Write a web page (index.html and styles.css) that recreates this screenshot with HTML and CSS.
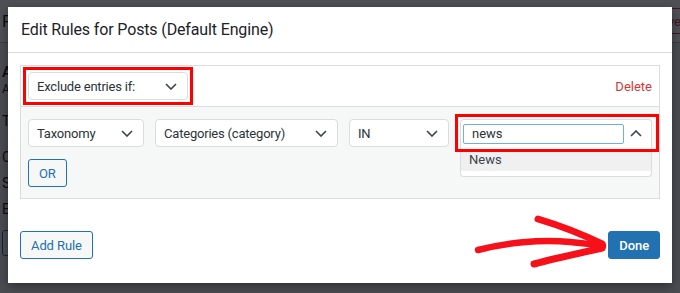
FILE: index.html
```html
<!DOCTYPE html>
<html lang="en">
<head>
    <meta charset="UTF-8">
    <meta name="viewport" content="width=device-width, initial-scale=1.0">
    <title>Edit Rules for Posts</title>
    <link rel="stylesheet" href="styles.css">
</head>
<body>
    <div class="page">
        <header class="page-head">
            <span class="page-title">Posts</span>
            <button class="page-remove">Remove</button>
        </header>
        <div class="page-body">
            <h2>Attributes</h2>
            <p class="muted">Attribute relevance</p>
            <p class="row-t">Title</p>
            <p class="row-c">Content</p>
            <p class="row-s">Slug</p>
            <p class="row-e">Excerpt</p>
            <button class="page-btn">Add/Remove</button>
        </div>
    </div>

    <div class="overlay"></div>

    <div class="modal">
        <div class="modal-head">
            <h1>Edit Rules for Posts (Default Engine)</h1>
        </div>
        <div class="modal-body">
            <div class="rule">
                <div class="rule-top">
                    <div class="select marked">
                        <span>Exclude entries if:</span>
                        <svg class="chev" viewBox="0 0 12 7"><path d="M1 1l5 5 5-5"/></svg>
                    </div>
                    <a class="delete" href="#">Delete</a>
                </div>
                <div class="rule-body">
                    <div class="conditions">
                        <div class="select w-tax">
                            <span>Taxonomy</span>
                            <svg class="chev" viewBox="0 0 12 7"><path d="M1 1l5 5 5-5"/></svg>
                        </div>
                        <div class="select w-cat">
                            <span>Categories (category)</span>
                            <svg class="chev" viewBox="0 0 12 7"><path d="M1 1l5 5 5-5"/></svg>
                        </div>
                        <div class="select w-op">
                            <span>IN</span>
                            <svg class="chev" viewBox="0 0 12 7"><path d="M1 1l5 5 5-5"/></svg>
                        </div>
                        <div class="combo marked-2">
                            <input class="combo-input" type="text" value="news">
                            <svg class="chev up" viewBox="0 0 12 7"><path d="M1 6l5-5 5 5"/></svg>
                            <ul class="combo-list">
                                <li class="active">News</li>
                            </ul>
                        </div>
                    </div>
                    <button class="btn">OR</button>
                </div>
            </div>
            <div class="modal-foot">
                <button class="btn">Add Rule</button>
                <button class="btn primary">Done</button>
            </div>
        </div>
    </div>

    <svg class="arrow" width="680" height="293" viewBox="0 0 680 293">
        <path d="M478 250 C 505 243, 540 239, 570 242 S 595 245, 603 246" stroke-width="6.5"/>
        <path d="M538 219 C 558 225, 580 233, 602 244" stroke-width="7"/>
        <path d="M534 264 C 556 258, 580 253, 602 248" stroke-width="7"/>
    </svg>
</body>
</html>
```

FILE: styles.css
```css
* {
    box-sizing: border-box;
}
body {
    margin: 0;
    width: 680px;
    height: 293px;
    overflow: hidden;
    position: relative;
    font-family: Roboto, "Noto Sans", sans-serif;
    color: #1e1e1e;
    background-color: #f0f0f1;
}

/* page behind the dialog */
.page {
    width: 680px;
    overflow: hidden;
}
.page-head {
    display: flex;
    align-items: center;
    height: 43px;
    padding: 0 0 0 2px;
    background-color: #fff;
    border-bottom: 1px solid #c3c4c7;
}
.page-title {
    font-size: 17px;
}
.page-remove {
    margin-left: auto;
    margin-right: -10px;
    height: 26px;
    padding: 0 8px;
    font: inherit;
    font-size: 13px;
    color: #d63638;
    background: #fff;
    border: 1px solid #d63638;
    border-radius: 3px;
}
.page-body {
    padding: 20px 2px 0;
    font-size: 14px;
}
.page-body h2 {
    margin: 0;
    font-size: 15px;
    font-weight: 600;
}
.page-body p {
    margin: 0;
}
.page-body .muted {
    font-size: 12px;
    margin-top: 1px;
}
.page-body .row-t {
    margin-top: 17px;
}
.page-body .row-c {
    margin-top: 20px;
}
.page-body .row-s,
.page-body .row-e {
    margin-top: 10px;
}
.page-btn {
    margin-top: 13px;
    height: 26px;
    padding: 0 10px;
    font: inherit;
    font-size: 13px;
    color: #2271b1;
    background: #f6f7f7;
    border: 1px solid #2271b1;
    border-radius: 3px;
}

.overlay {
    position: absolute;
    inset: 0;
    background-color: rgba(4, 6, 14, 0.7);
}

/* dialog */
.modal {
    position: absolute;
    left: 8px;
    top: 7px;
    width: 664px;
    background-color: #fff;
    box-shadow: 0 3px 10px rgba(0, 0, 0, 0.4);
}
.modal-head {
    height: 46px;
    padding: 0 13px;
    display: flex;
    align-items: center;
    border-bottom: 1px solid #dcdcde;
}
.modal-head h1 {
    margin: 0;
    font-size: 16px;
    font-weight: 400;
    letter-spacing: -0.14px;
    color: #1d2327;
}
.modal-body {
    padding: 12px 12px 24px;
}
.rule {
    border: 1px solid #dcdcde;
}
.rule-top {
    display: flex;
    align-items: center;
    justify-content: space-between;
    padding: 6px 7px;
    border-bottom: 1px solid #dcdcde;
}
.delete {
    font-size: 13px;
    color: #d63638;
    text-decoration: none;
}
.rule-body {
    padding: 12px 7px 11px;
    background-color: #f6f7f7;
}
.conditions {
    display: flex;
    gap: 11px;
    margin-bottom: 12px;
}

.select {
    position: relative;
    display: flex;
    align-items: center;
    justify-content: space-between;
    height: 28px;
    width: 160px;
    padding: 0 10px 0 8px;
    font-size: 13px;
    letter-spacing: -0.2px;
    color: #2c3338;
    background-color: #fff;
    border: 1px solid #dcdcde;
    border-radius: 4px;
}
.w-tax {
    width: 116px;
}
.w-cat {
    width: 183px;
}
.w-op {
    width: 100px;
}
.chev {
    width: 12px;
    height: 7px;
    fill: none;
    stroke: #3c434a;
    stroke-width: 1.6;
}

/* red annotation boxes */
.marked::after,
.marked-2::after {
    content: "";
    position: absolute;
    border: 3px solid #ff0000;
    pointer-events: none;
}
.marked::after {
    inset: -6px -6px -6px -6px;
}
.marked-2::after {
    inset: -6px -8px -5px -6px;
}

.combo {
    position: relative;
    display: flex;
    align-items: center;
    width: 192px;
    height: 28px;
    padding: 0 9px 0 2px;
    background-color: #fff;
    border: 1px solid #dcdcde;
    border-bottom: none;
    border-radius: 4px 4px 0 0;
}
.combo-input {
    width: 161px;
    height: 20px;
    margin: 0;
    padding: 0 8px;
    font: inherit;
    font-size: 13px;
    color: #2c3338;
    border: 1px solid #72aee6;
    border-radius: 2px;
    outline: none;
}
.chev.up {
    margin-left: auto;
}
.combo-list {
    position: absolute;
    top: 100%;
    left: -1px;
    right: -1px;
    margin: 0;
    padding: 2px 0 5px;
    list-style: none;
    background-color: #fff;
    border: 1px solid #dcdcde;
    border-top: none;
    border-radius: 0 0 4px 4px;
}
.combo-list li {
    height: 22px;
    line-height: 22px;
    padding: 0 8px;
    font-size: 13px;
    color: #3c434a;
}
.combo-list li.active {
    background-color: #f0f0f1;
}

.btn {
    height: 28px;
    padding: 0 10px;
    font: inherit;
    font-size: 13px;
    letter-spacing: -0.1px;
    color: #2271b1;
    background-color: #f6f7f7;
    border: 1px solid #2271b1;
    border-radius: 3px;
}
.modal-foot {
    display: flex;
    justify-content: space-between;
    margin-top: 32px;
}
.btn.primary {
    color: #fff;
    font-weight: 500;
    background-color: #2271b1;
}

.arrow {
    position: absolute;
    left: 0;
    top: 0;
    pointer-events: none;
}
.arrow path {
    fill: none;
    stroke: #f5101a;
    stroke-linecap: round;
}
```
